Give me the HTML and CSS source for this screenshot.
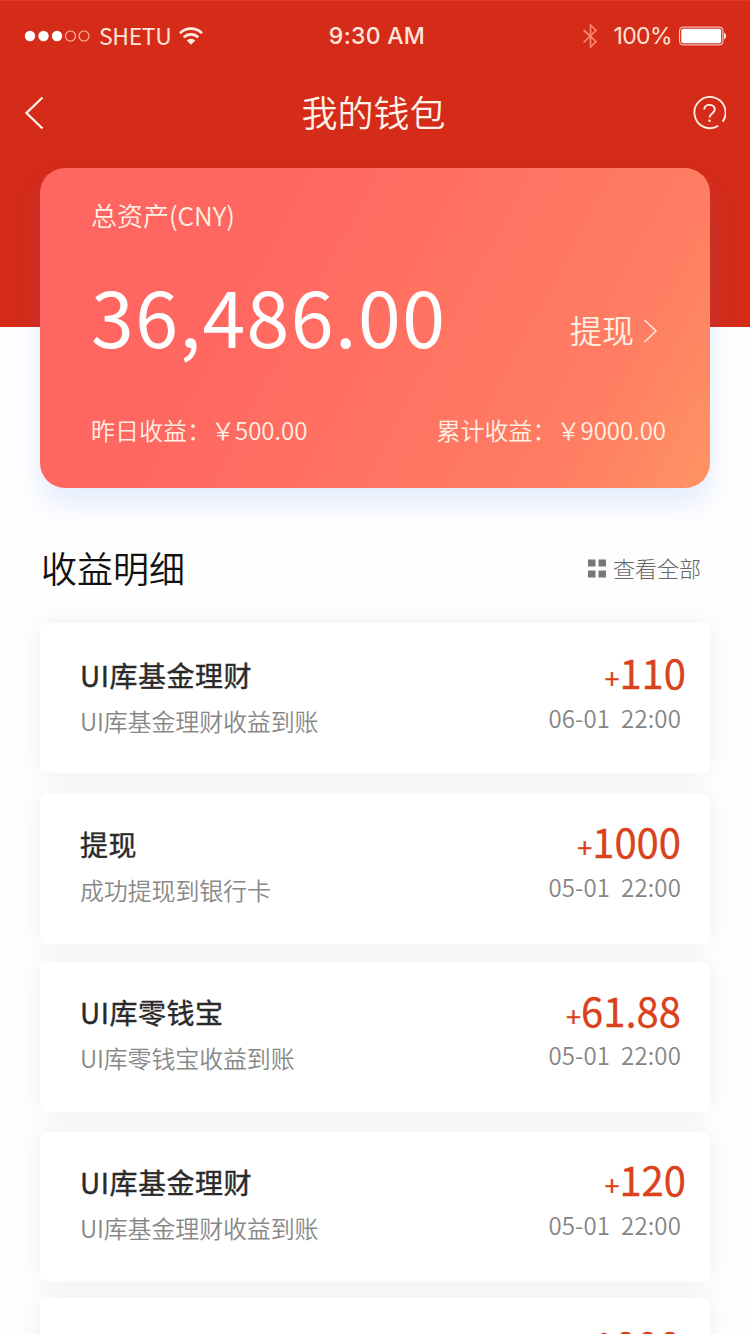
FILE: index.html
```html
<!DOCTYPE html>
<html lang="zh-CN">
<head>
<meta charset="utf-8">
<title>我的钱包</title>
<link rel="stylesheet" href="styles.css">
</head>
<body>
<div class="screen">
  <header class="header">
    <div class="status">
      <div class="status-left">
        <svg class="signal" width="66" height="12" viewBox="0 0 66 12">
          <g fill="#fff"><circle cx="6" cy="6" r="5.200"/><circle cx="19.500" cy="6" r="5.200"/><circle cx="33" cy="6" r="5.200"/></g>
          <g fill="none" stroke="#ffc0ae" stroke-width="1.100"><circle cx="46.500" cy="6" r="5"/><circle cx="60" cy="6" r="5"/></g>
        </svg>
        <span class="carrier">SHETU</span>
        <svg class="wifi" width="24" height="18" viewBox="0 0 24 18">
          <g fill="none" stroke="#ffe9e0" stroke-width="2.700"><path d="M1 6.200a15.600 15.600 0 0 1 22 0"/><path d="M4.700 10.400a10.300 10.300 0 0 1 14.600 0"/></g>
          <path d="M7.700 13.600a6.100 6.100 0 0 1 8.600 0L12 17.800z" fill="#ffe9e0"/>
        </svg>
      </div>
      <span class="clock">9:30 AM</span>
      <div class="status-right">
        <svg class="bluetooth" width="16" height="26" viewBox="0 0 16 26"><path d="M1.500 7 14 18.500 8.500 24V2l5.500 5.500L1.500 19.500" fill="none" stroke="#f58672" stroke-width="1.700"/></svg>
        <span class="percent">100%</span>
        <svg class="battery" width="48" height="20" viewBox="0 0 48 20">
          <rect x=".6" y="1.100" width="43.300" height="17.800" rx="3.200" fill="none" stroke="#ffe3dc" stroke-width="1"/>
          <rect x="2.300" y="2.800" width="39.900" height="14.400" rx="1.800" fill="#fff"/>
          <path d="M45 6.500q2.200.6 2.200 3.500T45 13.500z" fill="#ffe3dc"/>
        </svg>
      </div>
    </div>
    <nav class="nav">
      <svg width="20" height="34" viewBox="0 0 20 34"><path d="M18.500 1.500 2.500 17l16 15.500" fill="none" stroke="#fff3ea" stroke-width="2.300"/></svg>
      <h1 class="nav-title">我的钱包</h1>
      <svg width="34" height="34" viewBox="0 0 34 34" fill="none" stroke="#fff0e4" stroke-width="1.900">
        <path d="M26.300 29.800A15.600 15.600 0 1 1 30.600 25.800"/>
        <path d="M12.200 13.600C12.200 7.200 22.800 7.400 22.800 13.300c0 4-5.300 4.200-5.300 8.200"/>
        <circle cx="17.500" cy="24.800" r="1.200" fill="#fff0e4" stroke="none"/>
      </svg>
    </nav>
  </header>

  <main>
    <section class="asset-card">
      <div class="asset-label">总资产(CNY)</div>
      <div class="asset-main">
        <span class="asset-value">36,486.00</span>
        <a class="withdraw">提现<svg width="15" height="24" viewBox="0 0 15 24"><path d="M1.500 1 13 12 1.500 23" fill="none" stroke="#ffe9dc" stroke-width="1.600"/></svg></a>
      </div>
      <div class="asset-stats"><span>昨日收益：￥500.00</span><span>累计收益：￥9000.00</span></div>
    </section>

    <div class="section-head">
      <h2 class="section-title">收益明细</h2>
      <a class="view-all"><svg width="19" height="19" viewBox="0 0 19 19" fill="#777"><path d="M1 .5h7.500v7H1zM11.500.5H19v7h-7.500zM1 11.500h7.500v7H1zM11.500 11.500H19v7h-7.500z"/></svg><span>查看全部</span></a>
    </div>

    <ul class="records">
      <li class="record record-first">
        <div class="info"><div class="name">UI库基金理财</div><div class="desc">UI库基金理财收益到账</div></div>
        <div class="figures"><div class="amount amount-wide"><span class="plus">+</span>110</div><div class="date">06-01&nbsp; 22:00</div></div>
      </li>
      <li class="record record-second">
        <div class="info"><div class="name">提现</div><div class="desc">成功提现到银行卡</div></div>
        <div class="figures"><div class="amount"><span class="plus">+</span>1000</div><div class="date">05-01&nbsp; 22:00</div></div>
      </li>
      <li class="record record-third">
        <div class="info"><div class="name">UI库零钱宝</div><div class="desc">UI库零钱宝收益到账</div></div>
        <div class="figures"><div class="amount amount-decimal"><span class="plus">+</span>61.88</div><div class="date">05-01&nbsp; 22:00</div></div>
      </li>
      <li class="record record-fourth">
        <div class="info"><div class="name">UI库基金理财</div><div class="desc">UI库基金理财收益到账</div></div>
        <div class="figures"><div class="amount amount-wide"><span class="plus">+</span>120</div><div class="date">05-01&nbsp; 22:00</div></div>
      </li>
      <li class="record record-last">
        <div class="figures"><div class="amount"><span class="plus">+</span>1000</div></div>
      </li>
    </ul>
  </main>
</div>
</body>
</html>
```
FILE: styles.css
```css
* { box-sizing: border-box; margin: 0; padding: 0; }
body { font-family: "Noto Sans CJK SC", sans-serif; background: #fefefe; }
svg { display: block; flex: none; }
.screen { width: 750px; height: 1334px; overflow: hidden; }

.header { height: 327px; background: #d52b19; border-top: 1px solid #e03a28; color: #fff3ea; }
.status { display: grid; grid-template-columns: 1fr auto 1fr; align-items: center; height: 70px; padding: 0 23px 0 24px; }
.status-left, .status-right { display: flex; align-items: center; }
.status-right { justify-content: flex-end; }
.carrier { margin-left: 9px; padding-bottom: 2px; font-size: 23px; line-height: 30px; letter-spacing: -.4px; color: #ffe3d6; }
.wifi { margin-left: 8px; }
.clock { padding-left: 3px; font: 500 23px/30px Inter, sans-serif; letter-spacing: .3px; color: #ffe6dc; }
.percent { margin: 0 7px 0 15px; font: 400 23px/30px Inter, sans-serif; letter-spacing: -.6px; color: #ffe3d6; }
.nav { display: flex; align-items: center; justify-content: space-between; height: 83px; padding: 0 24px; }
.nav-title { margin: -3px 0 0 11px; font-size: 36px; line-height: 54px; font-weight: 350; }

.asset-card {
  position: relative; width: 670px; height: 320px; margin: -159px auto 0; padding: 27px 44px 0 51px;
  border-radius: 25px; color: #fff0e4;
  background: linear-gradient(118deg, #ff6561 0%, #ff6761 30%, #ff7662 65%, #ff7e63 82%, #ff9464 100%);
  box-shadow: 0 16px 28px rgba(80, 125, 255, .15);
}
.asset-label { font-size: 26px; line-height: 40px; font-weight: 350; }
.asset-main { display: flex; justify-content: space-between; height: 157px; padding: 30px 8px 0 0; }
.asset-value { font-size: 77px; line-height: 100px; letter-spacing: 1.500px; color: #fff; }
.withdraw { display: flex; align-items: center; gap: 9px; height: 48px; margin-top: 40px; font-size: 32px; line-height: 44px; font-weight: 350; }
.withdraw svg { margin-top: 3px; }
.asset-stats { display: flex; justify-content: space-between; margin-top: 20px; font-size: 24px; line-height: 36px; font-weight: 350; }

.section-head { display: flex; align-items: center; justify-content: space-between; height: 54px; margin-top: 52px; padding: 0 49px 0 41px; }
.section-title { margin-top: -1px; font-size: 36px; line-height: 54px; font-weight: 350; color: #111; }
.view-all { display: flex; align-items: center; gap: 7px; font-size: 22px; line-height: 32px; font-weight: 300; color: #666; }
.view-all svg { margin-top: 2px; }

.records { list-style: none; padding: 29px 40px 0; }
.record {
  display: flex; justify-content: space-between; height: 150px; padding: 25px 29px 0 40px;
  border-radius: 7px; background: #fff; box-shadow: 0 0 26px rgba(0, 0, 0, .065);
}
.record-first { padding-top: 27px; margin-bottom: 21px; }
.record-second { margin-bottom: 18px; }
.record-third { margin-bottom: 20px; }
.record-fourth { margin-bottom: 16px; }
.record-last { justify-content: flex-end; padding-top: 25px; }
.info { padding-top: 3px; }
.name { font-size: 28px; line-height: 45px; font-weight: 400; letter-spacing: .5px; color: #2a2a2a; -webkit-text-stroke: .4px #2a2a2a; }
.desc { font-size: 24px; line-height: 45px; letter-spacing: -.15px; color: #888; font-weight: 350; }
.figures { text-align: right; }
.amount { height: 44px; font-size: 40px; line-height: 44px; font-weight: 400; color: #d9421b; -webkit-text-stroke: .3px #d9421b; }
.amount-wide { margin-right: -5px; }
.amount-decimal { padding-top: 1px; }
.plus { font-size: 27px; }
.date { font-size: 24px; line-height: 48px; font-weight: 350; letter-spacing: .15px; color: #858585; }
```
